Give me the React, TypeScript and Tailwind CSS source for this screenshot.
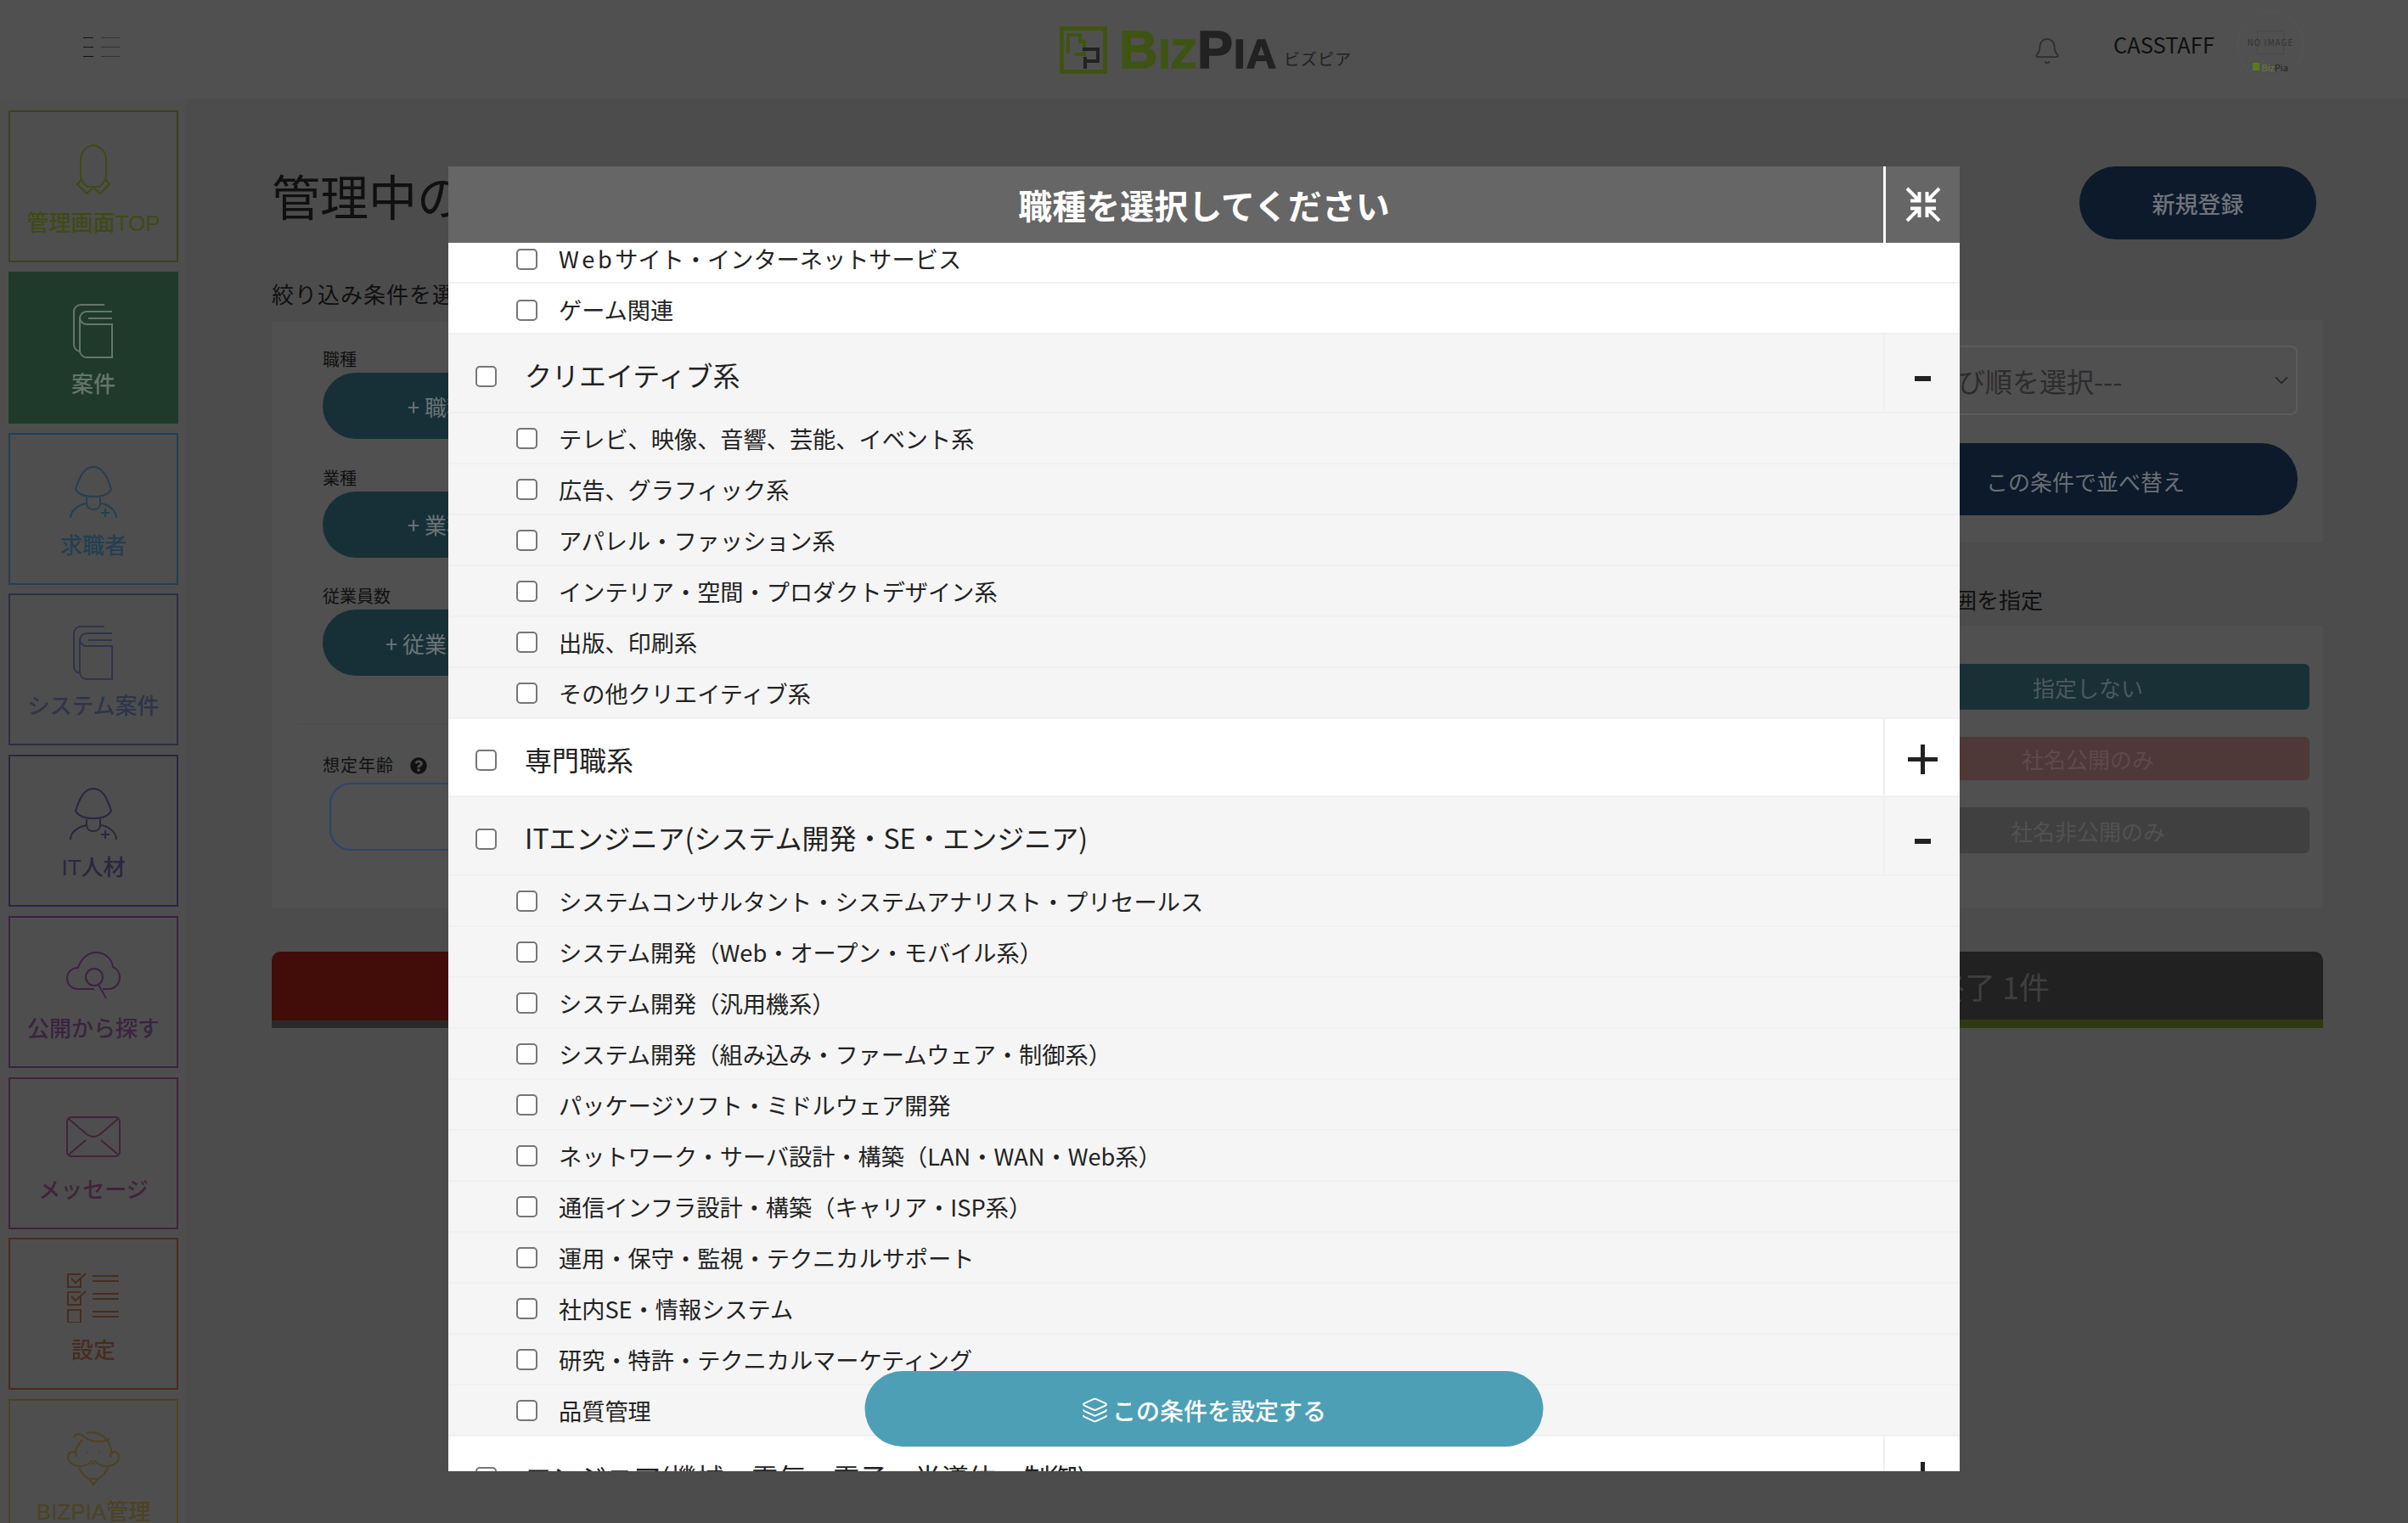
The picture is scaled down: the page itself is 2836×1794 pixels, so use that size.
import React from "react";
import { Bell, ChevronDown, Layers } from "lucide-react";
import { FaQuestionCircle } from "react-icons/fa";

//    ====== Sidebar ======

const IconHead = () => (
  <svg width="40" height="60" viewBox="0 0 40 60" fill="none" stroke="currentColor" strokeWidth="2">
    <path d="M20 1C11 3 5 9 5 19v17c0 6 4 11 8 14h14c4-3 8-8 8-14V19C35 9 29 3 20 1Z" />
    <path d="M6 41 1 47l11 11 8-7 8 7 11-11-5-6" />
  </svg>
);

const IconBook = () => (
  <svg width="48" height="64" viewBox="0 0 48 64" fill="none" stroke="currentColor" strokeWidth="2">
    <path d="M37 1H9a8 8 0 0 0-8 8v39a9 9 0 0 0 7 8" />
    <path d="M46 9H16a8 8 0 0 0-8 8v38a8 8 0 0 0 8 8h30V24H16a8 8 0 0 1-8-7" />
    <path d="M46 17H18" />
  </svg>
);

const IconPerson = () => (
  <svg width="56" height="62" viewBox="0 0 56 62" fill="none" stroke="currentColor" strokeWidth="2">
    <path d="M28 1C17 1 12 12 7 27c3 6 11 9 21 9s18-3 21-9C44 12 39 1 28 1Z" />
    <path d="M20 37v7c0 4 3 7 8 7s8-3 8-7v-7" />
    <path d="M1 61c0-9 9-15 19-17M36 44c10 1 19 8 19 17" />
    <path d="M42 50v10M37 55h10" />
  </svg>
);

const IconCloudSearch = () => (
  <svg width="64" height="56" viewBox="0 0 64 56" fill="none" stroke="currentColor" strokeWidth="2">
    <path d="M33 44H14C6 44 1 38 1 31s6-12 13-12c3-10 11-18 21-18 11 0 19 8 20 17 5 2 8 7 8 12 0 8-6 14-13 14h-7" />
    <circle cx="33" cy="30" r="10" />
    <path d="m38 39 9 16" />
  </svg>
);

const IconMail = () => (
  <svg width="64" height="48" viewBox="0 0 64 48" fill="none" stroke="currentColor" strokeWidth="2">
    <rect x="1" y="1" width="62" height="46" rx="5" />
    <path d="m3 3 21 18q8 6 16 0L61 3M3 45l20-17M61 45 41 28" />
  </svg>
);

const IconChecklist = () => (
  <svg width="62" height="60" viewBox="0 0 62 60" fill="none" stroke="currentColor" strokeWidth="2">
    <path d="M16 3H1v15h15V8M1 24v15h15V29M1 45h15v15H1zM1 24h15" />
    <path d="m5 8 5 5 12-11M5 29l5 5 12-11" />
    <path d="M30 5h31M30 11h31M30 26h31M30 32h31M30 47h31M30 53h31" />
  </svg>
);

const IconFace = () => (
  <svg width="64" height="64" viewBox="0 0 64 64" fill="none" stroke="currentColor" strokeWidth="2">
    <path d="M9 7c3-6 9-4 13 0 8 6 22 7 30 1" />
    <path d="M24 2c8-2 20 1 25 10 3 6 5 11 5 15M10 27c1-6 4-12 9-17" />
    <path d="M31 34c-6 8-18 9-25 4-6-5-5-14 2-14 4 0 5 4 3 6" />
    <path d="M33 34c6 8 18 9 25 4 6-5 5-14-2-14-4 0-5 4-3 6" />
    <path d="M15 43c3 7 8 11 12 13l5 7 5-7c4-2 9-6 12-13M27 56h10" />
    <path d="M24 25h2M38 25h2M30 38h4" />
  </svg>
);

interface SidebarItem {
  label: string;
  icon: React.ReactNode;
  className: string;
}

const SIDEBAR_ITEMS: SidebarItem[] = [
  { label: "管理画面TOP", icon: <IconHead />, className: "border-[#3b4120] text-[#3f4a14]" },
  { label: "案件", icon: <IconBook />, className: "border-[#1f3a2b] bg-[#1f3a2b] text-[#64766a]" },
  { label: "求職者", icon: <IconPerson />, className: "border-[#243f52] text-[#243f52]" },
  { label: "システム案件", icon: <IconBook />, className: "border-[#2c2f42] text-[#30344a]" },
  { label: "IT人材", icon: <IconPerson />, className: "border-[#2b2640] text-[#2b2640]" },
  { label: "公開から探す", icon: <IconCloudSearch />, className: "border-[#3a2440] text-[#3a2440]" },
  { label: "メッセージ", icon: <IconMail />, className: "border-[#40243a] text-[#40243a]" },
  { label: "設定", icon: <IconChecklist />, className: "border-[#482c1e] text-[#482c1e]" },
  { label: "BIZPIA管理", icon: <IconFace />, className: "border-[#4c4222] text-[#4c4222]" },
];

const Sidebar = () => (
  <aside className="w-[220px] shrink-0 bg-[#4e4e4e] pl-[10px] pr-[10px] pt-[13px] flex flex-col gap-[10.75px]">
    {SIDEBAR_ITEMS.map((item) => (
      <div
        key={item.label}
        className={`h-[179px] shrink-0 border-2 flex flex-col items-center pt-[36px] ${item.className}`}
      >
        <div className="h-[64px] flex items-center justify-center">{item.icon}</div>
        <div className="mt-[12px] h-[38px] leading-[38px] text-[26px] font-medium font-['Liberation_Sans','Noto_Sans_CJK_JP',sans-serif]">
          {item.label}
        </div>
      </div>
    ))}
  </aside>
);

//    ====== Page header ======

const Logo = () => (
  <div className="flex items-end">
    <svg width="56" height="56" viewBox="0 0 56 56" fill="none">
      <rect x="2.5" y="2.5" width="51" height="51" stroke="#3f5412" strokeWidth="5" />
      <path d="M10 32V10h14v8h5v15H18" stroke="#3f5412" strokeWidth="4" />
      <path d="M27 27h18v14H31" stroke="#222" strokeWidth="4" />
      <path d="M30 36v14" stroke="#222" strokeWidth="4" />
    </svg>
    <div className="ml-[14px] -mb-[1px] h-[60px] leading-[60px] tracking-[1px] whitespace-nowrap font-bold font-['Liberation_Sans',sans-serif] [-webkit-text-stroke:1.5px]">
      <span className="text-[#3f5412] text-[63px]">B</span>
      <span className="text-[#3f5412] text-[49px]">IZ</span>
      <span className="text-[#222] text-[63px]">P</span>
      <span className="text-[#222] text-[49px]">IA</span>
    </div>
    <span className="ml-[8px] mb-[8px] text-[19px] leading-[20px] tracking-[1px] text-[#222]">ビズピア</span>
  </div>
);

const PageHeader = () => (
  <header className="h-[117px] bg-[#505050] relative flex items-center justify-between pl-[98px] pr-[123px]">
    <svg width="44" height="24" viewBox="0 0 44 24" className="-mt-[5px]">
      <path d="M0 .5h12M0 11.5h12M0 22.5h12" stroke="#111" />
      <path d="M21 .5h22M21 11.5h22M21 22.5h22" stroke="#333" />
    </svg>
    <div className="absolute left-[1248px] top-[28px]">
      <Logo />
    </div>
    <div className="flex items-center">
      <Bell size={34} strokeWidth={1.3} className="text-[#2e2e2e] mt-[2px]" />
      <span className="ml-[61px] text-[25.5px] leading-none text-[#0f0f0f] -mt-[14px]">CASSTAFF</span>
      <div className="relative ml-[27px] w-[78px] h-[80px] rounded-full border border-dashed border-[#575a50] flex flex-col items-center pt-[29px] -mt-[12px]">
        <span className="absolute top-[22px] w-[32px] h-[28px] border border-[#474747]" />
        <span className="relative text-[10px] leading-[14px] tracking-[1px] text-[#333] whitespace-nowrap">NO IMAGE</span>
        <span className="mt-[17px] flex items-center text-[11px] leading-[10px]">
          <span className="w-[8px] h-[9px] mr-[2px] bg-[#5a7a1c]" />
          <span className="text-[#6a7d30]">Biz</span>
          <span className="text-[#222]">Pia</span>
        </span>
      </div>
    </div>
  </header>
);

//    ====== Page behind the modal ======

const FILTER_BUTTONS = [
  { label: "職種", text: "+ 職種を選択" },
  { label: "業種", text: "+ 業種を選択" },
  { label: "従業員数", text: "+ 従業員数を選択" },
];

const LABEL_FONT = "font-['Liberation_Sans','Noto_Sans_CJK_JP',sans-serif]";

const PageBody = () => (
  <main className="flex-1 bg-[#4c4c4c] pl-[100px] pr-[100px]">
    <div className="h-[79px] mt-[79px] flex items-start justify-between">
      <h1 className={`mt-[2px] text-[57px] leading-[72px] text-[#101010] ${LABEL_FONT}`}>管理中の案件</h1>
      <button className="w-[279px] h-[86px] mr-[8px] pt-[2px] rounded-full bg-[#0c1a2b] text-[27px] font-medium text-[#6f737a]">
        新規登録
      </button>
    </div>
    <div className="flex justify-between items-start mt-[-3px]">
      <div className="w-[1100px]">
        <p className={`mt-[57px] h-[38px] leading-[38px] text-[26px] tracking-[1px] text-[#101010] ${LABEL_FONT}`}>
          絞り込み条件を選択
        </p>
        <div className="mt-[12px] h-[691px] bg-[#505050] pl-[60px] pt-[30px]">
          {FILTER_BUTTONS.map((filter) => (
            <div key={filter.label} className="mb-[31.5px]">
              <div className={`h-[30px] leading-[30px] text-[20px] text-[#101010] ${LABEL_FONT}`}>{filter.label}</div>
              <div className="w-[350px] h-[78px] rounded-full bg-[#173037] flex items-center justify-center text-[26px] text-[#6b7476]">
                {filter.text}
              </div>
            </div>
          ))}
          <div className="-ml-[30px] mt-[56px] border-t border-[#4b4b4b]" />
          <div className={`mt-[34px] h-[30px] flex items-center text-[20px] text-[#101010] tracking-[1px] ${LABEL_FONT}`}>
            想定年齢
            <FaQuestionCircle size={20} className="ml-[19px] text-[#111]" />
          </div>
          <div className="ml-[8px] mt-[5px] w-[500px] h-[80px] rounded-[25px] border-2 border-[#2d4668]" />
        </div>
        <div className="mt-[51px] h-[90px] rounded-t-[10px] bg-[#420d09] border-b-[9px] border-[#2a2a2a]" />
      </div>
      <div className="w-[566px] mt-[105px]">
        <div className="h-[262px] bg-[#505050] pl-[36px] pr-[30px] pt-[30px]">
          <div className="h-[82px] rounded-[8px] border-2 border-[#5c5c5c] flex items-center justify-between pl-[20px] pr-[4px]">
            <span className="text-[32px] text-[#2c2c2c] pl-[46px]">並び順を選択---</span>
            <ChevronDown size={26} strokeWidth={1.5} className="text-[#222]" />
          </div>
          <div className="mt-[33px] h-[85px] pt-[3px] rounded-full bg-[#0c1a2b] flex items-center justify-center text-[26px] text-[#6a6f75]">
            この条件で並べ替え
          </div>
        </div>
        <div className="mt-[48px] h-[38px] leading-[38px] pl-[54px] text-[26px] text-[#101010]">公開範囲を指定</div>
        <div className="mt-[12px] h-[333px] bg-[#505050] pl-[28px] pr-[16px] pt-[45px] flex flex-col gap-[32px]">
          <div className="h-[54px] rounded-[6px] bg-[#1a3037] flex items-center justify-center text-[26px] text-[#4a5a5e]">指定しない</div>
          <div className="h-[51px] rounded-[6px] bg-[#4f3838] flex items-center justify-center text-[26px] text-[#5e4b4b]">社名公開のみ</div>
          <div className="h-[54px] rounded-[6px] bg-[#404040] flex items-center justify-center text-[26px] text-[#525252]">社名非公開のみ</div>
        </div>
        <div className="mt-[51px] h-[90px] rounded-t-[10px] bg-[#212121] border-b-[10px] border-[#2f3a14] flex items-center justify-end pr-[322px] text-[36px] text-[#3f3f3f]">
          募集終了 1件
        </div>
      </div>
    </div>
  </main>
);

//    ====== Modal ======

interface JobSection {
  title: string;
  open: boolean;
  items: string[];
}

const JOB_SECTIONS: JobSection[] = [
  {
    title: "クリエイティブ系",
    open: true,
    items: [
      "テレビ、映像、音響、芸能、イベント系",
      "広告、グラフィック系",
      "アパレル・ファッション系",
      "インテリア・空間・プロダクトデザイン系",
      "出版、印刷系",
      "その他クリエイティブ系",
    ],
  },
  { title: "専門職系", open: false, items: [] },
  {
    title: "ITエンジニア(システム開発・SE・エンジニア)",
    open: true,
    items: [
      "システムコンサルタント・システムアナリスト・プリセールス",
      "システム開発（Web・オープン・モバイル系）",
      "システム開発（汎用機系）",
      "システム開発（組み込み・ファームウェア・制御系）",
      "パッケージソフト・ミドルウェア開発",
      "ネットワーク・サーバ設計・構築（LAN・WAN・Web系）",
      "通信インフラ設計・構築（キャリア・ISP系）",
      "運用・保守・監視・テクニカルサポート",
      "社内SE・情報システム",
      "研究・特許・テクニカルマーケティング",
      "品質管理",
    ],
  },
  { title: "エンジニア(機械・電気・電子・半導体・制御)", open: false, items: [] },
];

const CHECKBOX = "appearance-none shrink-0 w-[25px] h-[25px] rounded-[5px] border-2 border-[#767676] bg-white";

const SubRow = ({ label, white }: { label: React.ReactNode; white?: boolean }) => (
  <label className={`h-[60px] flex items-center pl-[80px] border-b-2 border-[#f0f0f0] ${white ? "pt-[4px] bg-white" : "pt-[2px] bg-[#f5f5f5]"}`}>
    <input type="checkbox" className={CHECKBOX} />
    <span className="ml-[25px] text-[27.2px] leading-none text-[#222]">{label}</span>
  </label>
);

const SectionRow = ({ section }: { section: JobSection }) => (
  <>
    <div className={`h-[92.5px] flex items-stretch border-b-2 border-[#f0f0f0] ${section.open ? "bg-[#f5f5f5]" : "bg-white"}`}>
      <label className="flex-1 flex items-center pl-[32px] pt-[8px]">
        <input type="checkbox" className={CHECKBOX} />
        <span className="ml-[33px] -mt-[4px] text-[32px] leading-none text-[#222]">{section.title}</span>
      </label>
      <div className="w-[90px] border-l-2 border-[#f0f0f0] flex items-center justify-center text-[#222]">
        {section.open ? (
          <span className="w-[19px] h-[6px] mt-[14px] bg-[#222]" />
        ) : (
          <span className="relative w-[35px] h-[35px] mt-[5px]">
            <span className="absolute left-0 top-[15px] w-[35px] h-[5px] bg-[#222]" />
            <span className="absolute left-[15px] top-0 w-[5px] h-[35px] bg-[#222]" />
          </span>
        )}
      </div>
    </div>
    {section.items.map((item) => (
      <SubRow key={item} label={item} />
    ))}
  </>
);

const IconCompress = () => (
  <svg width="42" height="42" viewBox="0 0 42 42" fill="none" stroke="white" strokeWidth="4">
    <path d="M2 2l13 13M6 16.5h10.5V6" />
    <path d="M40 2 27 15M36 16.5H25.5V6" />
    <path d="M2 40l13-13M6 25.5h10.5V36" />
    <path d="M40 40 27 27M36 25.5H25.5V36" />
  </svg>
);

const JobModal = () => (
  <div className="fixed inset-0 flex justify-center pt-[196px]">
    <div className="relative w-[1780px] h-[1537px] bg-white overflow-hidden flex flex-col">
      <div className="h-[90px] shrink-0 bg-[#666] flex items-stretch text-white">
        <h2 className="flex-1 pl-[90px] flex items-center justify-center text-[40px] font-bold">
          職種を選択してください
        </h2>
        <div className="w-[90px] border-l-[3px] border-white flex items-center justify-center">
          <IconCompress />
        </div>
      </div>
      <div className="flex-1 overflow-hidden">
        <div className="-mt-[12px]">
          <SubRow
            white
            label={
              <>
                <span className="tracking-[3.5px]">Web</span>サイト・インターネットサービス
              </>
            }
          />
          <SubRow white label="ゲーム関連" />
          {JOB_SECTIONS.map((section) => (
            <SectionRow key={section.title} section={section} />
          ))}
        </div>
      </div>
      <button className="absolute bottom-[29px] left-1/2 -translate-x-1/2 w-[799px] h-[89px] pt-[2px] rounded-full bg-[#4d9fb6] flex items-center justify-center text-white text-[28px] font-medium">
        <Layers size={32} strokeWidth={1.5} className="mr-[4px]" />
        この条件を設定する
      </button>
    </div>
  </div>
);

export default function App() {
  return (
    <div className="relative w-[2836px] h-[1794px] overflow-hidden font-['Noto_Sans_CJK_JP','Noto_Sans',sans-serif]">
      <PageHeader />
      <div className="flex h-[1677px]">
        <Sidebar />
        <PageBody />
      </div>
      <JobModal />
    </div>
  );
}
